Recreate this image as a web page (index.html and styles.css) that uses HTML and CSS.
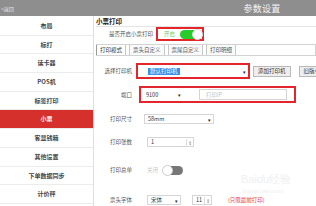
FILE: index.html
```html
<!DOCTYPE html>
<html lang="zh">
<head>
<meta charset="utf-8">
<link rel="stylesheet" href="styles.css">
</head>
<body>
<div class="topbar">
  <span class="back">&lt;返回</span>
  <span class="title">参数设置</span>
</div>
<div class="main">
  <nav class="sidebar">
    <div class="item">布局</div>
    <div class="item">标打</div>
    <div class="item">读卡器</div>
    <div class="item">POS机</div>
    <div class="item">标签打印</div>
    <div class="item active">小票</div>
    <div class="item">客显钱箱</div>
    <div class="item">其他设置</div>
    <div class="item">下单数据同步</div>
    <div class="item">计价秤</div>
  </nav>
  <section class="content">
    <div class="heading">小票打印</div>
    <div class="switch-row">
      <span class="sw-label">是否开启小票打印</span>
      <span class="redbox sw-box">
        <span class="on-text">开启</span>
        <span class="toggle on"><span class="knob"></span></span>
      </span>
    </div>
    <div class="tabs">
      <span class="tab active">打印模式</span>
      <span class="tab">票头自定义</span>
      <span class="tab">票尾自定义</span>
      <span class="tab">打印明细</span>
    </div>
    <div class="row r1">
      <span class="label">选择打印机</span>
      <span class="redbox printer-box">
        <span class="sel printer-sel"><span class="hl">默认打印机</span><span class="arrow">▾</span></span>
      </span>
      <span class="btn add">添加打印机</span>
      <span class="btn old">旧版小票</span>
    </div>
    <div class="row r2">
      <span class="label">端口</span>
      <span class="redbox port-box">
        <span class="sel port-sel">9100<span class="arrow">▾</span></span>
        <span class="input ip">打印IP</span>
      </span>
    </div>
    <div class="row r3">
      <span class="label">打印尺寸</span>
      <span class="sel size-sel">58mm<span class="arrow">▾</span></span>
    </div>
    <div class="row r4">
      <span class="label">打印张数</span>
      <span class="input num">1<span class="spin">⇕</span></span>
    </div>
    <div class="row r5">
      <span class="label">打印总单</span>
      <span class="off-text">关闭</span>
      <span class="toggle off"><span class="knob"></span></span>
    </div>
    <div class="row r6">
      <span class="label">票头字体</span>
      <span class="sel font-sel">宋体<span class="arrow">▾</span></span>
      <span class="input fsize">11<span class="spin">⇕</span></span>
      <span class="note">(只限最前打印)</span>
    </div>
    <div class="watermark">Bai<span class="paw">du</span>经验<br><small>jingyan.baidu.com</small></div>
  </section>
</div>
</body>
</html>
```
FILE: styles.css
```css
* { box-sizing: border-box; }
html, body { margin: 0; padding: 0; }
body {
  width: 316px;
  height: 206px;
  overflow: hidden;
  background: #fff;
  font-family: "Noto Sans CJK SC", "Noto Sans", sans-serif;
  color: #333;
}
.topbar {
  height: 16px;
  background: #8e8e8e;
  display: flex;
  align-items: center;
  color: #fff;
}
.back {
  font-size: 5px;
  padding-left: 1px;
  color: #e8e8e8;
  width: 20px;
}
.title {
  margin-left: auto;
  width: 108px;
  text-align: center;
  font-size: 9px;
  letter-spacing: 0.3px;
  color: #f4f4f4;
}
.main {
  display: flex;
  height: 190px;
}
.sidebar {
  width: 94px;
  border-right: 1px solid #dedede;
  padding-top: 1px;
  flex-shrink: 0;
}
.item {
  height: 18.7px;
  line-height: 18px;
  text-align: center;
  font-size: 6px;
  font-weight: bold;
  color: #444;
  border-bottom: 1px solid #ececec;
}
.item.active {
  background: #d6302d;
  color: #fff;
}
.content {
  position: relative;
  flex: 1;
  min-width: 0;
  overflow: hidden;
  padding-left: 2px;
}
.heading {
  height: 11px;
  line-height: 10px;
  font-size: 6.5px;
  font-weight: bold;
  color: #222;
  border-bottom: 1px solid #e4e4e4;
}
.switch-row {
  display: flex;
  align-items: center;
  height: 14px;
}
.sw-label {
  width: 60px;
  text-align: right;
  font-size: 5.5px;
  color: #555;
  padding-right: 3px;
}
.redbox {
  border: 2px solid #e3262c;
  display: flex;
  align-items: center;
  flex-shrink: 0;
}
.sw-box {
  width: 48px;
  height: 14px;
  padding-left: 6px;
}
.on-text {
  font-size: 5.5px;
  color: #7ac84a;
  margin-right: 5px;
}
.toggle {
  position: relative;
  width: 22px;
  height: 9px;
  border-radius: 5px;
  display: inline-block;
  flex-shrink: 0;
}
.toggle.on { background: #27cc2a; }
.toggle.on .knob {
  position: absolute;
  right: -1px;
  top: -1px;
  width: 11px;
  height: 11px;
  border-radius: 50%;
  background: #fff;
  border: 1px solid #ddd;
}
.toggle.off {
  background: #777;
  width: 20px;
}
.toggle.off .knob {
  position: absolute;
  left: -1px;
  top: -1px;
  width: 11px;
  height: 11px;
  border-radius: 50%;
  background: #fff;
  border: 1px solid #ccc;
}
.tabs {
  display: flex;
  height: 12px;
  margin-top: 3px;
  border: 1px solid #d2d2d2;
  border-left: none;
}
.tab {
  font-size: 5.5px;
  line-height: 10px;
  padding: 0 3px;
  margin-right: 3px;
  border-right: 1px solid #c8c8c8;
  border-left: 1px solid #c8c8c8;
  color: #555;
  background: #fafafa;
}
.tab.active {
  background: #fff;
  color: #333;
  border-left: 1px solid #999;
}
.row {
  display: flex;
  align-items: center;
}
.label {
  width: 38px;
  text-align: right;
  font-size: 5.5px;
  color: #555;
  padding-right: 2px;
  flex-shrink: 0;
}
.r1 { margin-top: 7px; height: 16px; }
.r2 { margin-top: 7px; height: 17px; }
.r3 { margin-top: 11px; height: 10px; }
.r4 { margin-top: 13px; height: 10px; }
.r5 { margin-top: 18px; height: 10px; }
.r6 { margin-top: 20px; height: 10px; }
.sel, .input {
  position: relative;
  display: flex;
  align-items: center;
  font-size: 5.5px;
  color: #333;
  background: #fff;
  padding-left: 3px;
  flex-shrink: 0;
}
.arrow {
  position: absolute;
  right: 2px;
  font-size: 5px;
  color: #222;
}
.printer-box {
  margin-left: 2px;
  width: 114px;
  height: 16px;
}
.printer-sel {
  width: 110px;
  height: 12px;
  padding-left: 10px;
}
.hl {
  background: #3b8fe8;
  color: #fff;
  padding: 0 2px;
  line-height: 7px;
}
.btn {
  font-size: 5.5px;
  color: #333;
  background: #eee;
  border: 1px solid #b9b9b9;
  height: 11px;
  line-height: 9px;
  padding: 0 4px;
  white-space: nowrap;
  flex-shrink: 0;
}
.add { margin-left: 3px; }
.old { margin-left: 8px; }
.port-box {
  margin-left: 5px;
  width: 157px;
  height: 17px;
}
.port-sel {
  width: 42px;
  height: 10px;
  padding-left: 5px;
}
.ip {
  margin-left: 16px;
  width: 88px;
  height: 11px;
  border: 1px solid #d4d4d4;
  color: #c4c4c4;
  padding-left: 6px;
}
.size-sel {
  margin-left: 10px;
  width: 70px;
  height: 10px;
  border: 1px solid #d6d6d6;
}
.num {
  margin-left: 13px;
  width: 47px;
  height: 10px;
  border: 1px solid #d6d6d6;
}
.spin {
  position: absolute;
  right: 1px;
  font-size: 5px;
  color: #888;
  border-left: 1px solid #ddd;
  padding-left: 1px;
}
.off-text {
  margin-left: 13px;
  font-size: 5.5px;
  color: #c8c8c8;
  margin-right: 5px;
}
.font-sel {
  margin-left: 13px;
  width: 34px;
  height: 10px;
  border: 1px solid #d6d6d6;
}
.fsize {
  margin-left: 11px;
  width: 20px;
  height: 10px;
  border: 1px solid #d6d6d6;
}
.note {
  margin-left: 16px;
  font-size: 5.5px;
  color: #e03a3a;
}
.watermark {
  position: absolute;
  left: 147px;
  top: 158px;
  font-family: "Liberation Sans", sans-serif;
  font-size: 11px;
  line-height: 10px;
  color: #efefef;
  pointer-events: none;
}
.watermark small {
  font-size: 5px;
  margin-left: 2px;
}
.paw { font-style: italic; }
```
